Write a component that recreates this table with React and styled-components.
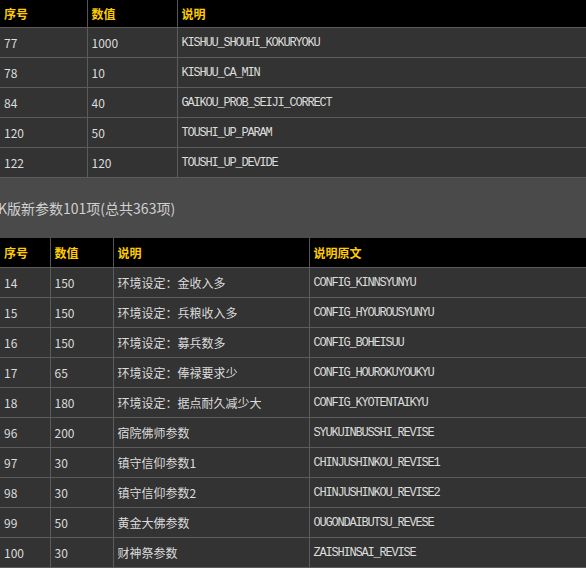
import styled, { createGlobalStyle } from "styled-components";

const GlobalStyle = createGlobalStyle`
  html, body {
    margin: 0;
    padding: 0;
    background: #4a4a4a;
    overflow: hidden;
  }
  body {
    font-family: "Noto Sans CJK SC", "Liberation Sans", sans-serif;
  }
`;

const Page = styled.div`
  width: 586px;
  height: 568px;
  overflow: hidden;
  background: #4a4a4a;
`;

const Table = styled.table`
  width: 100%;
  border-collapse: collapse;
  table-layout: fixed;
`;

const HeadCell = styled.th`
  height: ${({ $h }) => $h || 28}px;
  padding: 0 0 0 4px;
  background: #000;
  color: #ffcc00;
  font-size: 12px;
  font-weight: bold;
  text-align: left;
  border-left: 1px solid #555;
  border-bottom: 1px solid #5c5c5c;
  &:first-child {
    border-left: none;
  }
`;

const Cell = styled.td`
  height: 29px;
  padding: 0 0 0 4px;
  background: #333;
  color: #dcdcdc;
  font-family: ${({ $mono }) =>
    $mono ? '"Liberation Mono", monospace' : '"Noto Sans CJK SC", "Liberation Sans", sans-serif'};
  font-size: 12px;
  letter-spacing: ${({ $mono }) => ($mono ? "-1.2px" : "0")};
  border-left: 1px solid #5c5c5c;
  border-bottom: 1px solid #5c5c5c;
  white-space: nowrap;
  &:first-child {
    border-left: none;
  }
`;

const Title = styled.div`
  height: 60px;
  display: flex;
  align-items: center;
  margin-left: -2px;
  color: #d0d0d0;
  font-size: 14px;
`;

const oldRows = [
  ["77", "1000", "KISHUU_SHOUHI_KOKURYOKU"],
  ["78", "10", "KISHUU_CA_MIN"],
  ["84", "40", "GAIKOU_PROB_SEIJI_CORRECT"],
  ["120", "50", "TOUSHI_UP_PARAM"],
  ["122", "120", "TOUSHI_UP_DEVIDE"],
];

const newRows = [
  ["14", "150", "环境设定：金收入多", "CONFIG_KINNSYUNYU"],
  ["15", "150", "环境设定：兵粮收入多", "CONFIG_HYOUROUSYUNYU"],
  ["16", "150", "环境设定：募兵数多", "CONFIG_BOHEISUU"],
  ["17", "65", "环境设定：俸禄要求少", "CONFIG_HOUROKUYOUKYU"],
  ["18", "180", "环境设定：据点耐久减少大", "CONFIG_KYOTENTAIKYU"],
  ["96", "200", "宿院佛师参数", "SYUKUINBUSSHI_REVISE"],
  ["97", "30", "镇守信仰参数1", "CHINJUSHINKOU_REVISE1"],
  ["98", "30", "镇守信仰参数2", "CHINJUSHINKOU_REVISE2"],
  ["99", "50", "黄金大佛参数", "OUGONDAIBUTSU_REVESE"],
  ["100", "30", "财神祭参数", "ZAISHINSAI_REVISE"],
];

export default function App() {
  return (
    <Page>
      <GlobalStyle />
      <Table>
        <colgroup>
          <col style={{ width: 87 }} />
          <col style={{ width: 90 }} />
          <col />
        </colgroup>
        <thead>
          <tr>
            <HeadCell $h={27}>序号</HeadCell>
            <HeadCell $h={27}>数值</HeadCell>
            <HeadCell $h={27}>说明</HeadCell>
          </tr>
        </thead>
        <tbody>
          {oldRows.map((r) => (
            <tr key={r[0]}>
              <Cell>{r[0]}</Cell>
              <Cell>{r[1]}</Cell>
              <Cell $mono>{r[2]}</Cell>
            </tr>
          ))}
        </tbody>
      </Table>
      <Title>K版新参数101项(总共363项)</Title>
      <Table>
        <colgroup>
          <col style={{ width: 50 }} />
          <col style={{ width: 63 }} />
          <col style={{ width: 196 }} />
          <col />
        </colgroup>
        <thead>
          <tr>
            <HeadCell $h={29}>序号</HeadCell>
            <HeadCell $h={29}>数值</HeadCell>
            <HeadCell $h={29}>说明</HeadCell>
            <HeadCell $h={29}>说明原文</HeadCell>
          </tr>
        </thead>
        <tbody>
          {newRows.map((r) => (
            <tr key={r[0]}>
              <Cell>{r[0]}</Cell>
              <Cell>{r[1]}</Cell>
              <Cell>{r[2]}</Cell>
              <Cell $mono>{r[3]}</Cell>
            </tr>
          ))}
        </tbody>
      </Table>
    </Page>
  );
}
